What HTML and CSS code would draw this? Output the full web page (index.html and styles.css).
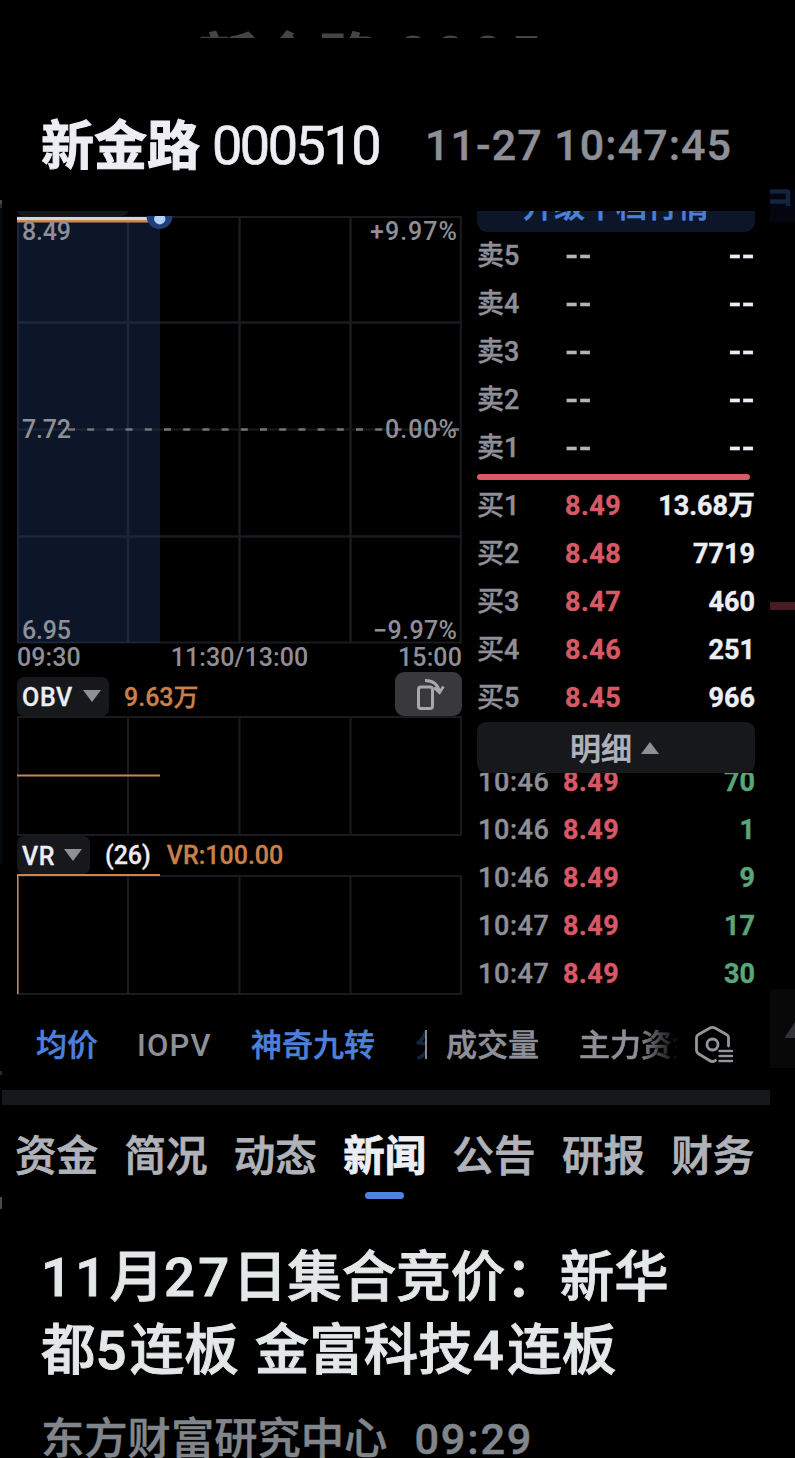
FILE: index.html
```html
<!DOCTYPE html>
<html lang="zh-CN">
<head>
<meta charset="utf-8">
<title>新金路 000510</title>
<link rel="stylesheet" href="styles.css">
</head>
<body>
<div class="page">
  <div class="edge edge-left"><i class="l1"></i><i class="l2"></i><i class="l3"></i><i class="l4"></i><i class="l5"></i></div>
  <div class="edge edge-right">
    <svg width="25" height="1458" viewBox="0 0 25 1458">
      <rect x="0" y="190" width="25" height="32" fill="#03060f"/>
      <path d="M0 191.500H18M18 190V206M0 201.500H18" fill="none" stroke="#14233f" stroke-width="4.500"/>
      <rect x="0" y="602" width="25" height="8" fill="#481a22"/>
      <rect x="0" y="989" width="25" height="79" fill="#080808"/>
      <path d="M15 1037L25 1022V1038H16Z" fill="#323234"/>
    </svg>
  </div>

  <div class="peek"><span class="peek-name">新金路</span><span class="peek-code">0005</span></div>
  <header class="header">
    <h1 class="name">新金路</h1><span class="code">000510</span><time class="time">11-27 10:47:45</time>
  </header>

  <main class="quote">
    <section class="charts">
      <svg class="chart-main" width="445" height="433" viewBox="17 211 445 433">
        <path d="M17 211H129Q127 216 121 216H24Q18 216 17 211Z" fill="#151619"/>
        <g stroke="#1a1b1f" fill="none">
          <path d="M17 217H462M460.750 216V643M18 216V643M17 642.500H462" stroke-width="2"/>
          <path d="M128 217V643M239.500 217V643M350.500 217V643M17 322.500H462M17 536.500H462" stroke-width="2.500"/>
          <path d="M17 429.500H462" stroke-width="2"/>
        </g>
        <rect x="17" y="219" width="143" height="424" fill="#1e3864" fill-opacity=".4"/>
        <path d="M68 429.500H460" stroke="#74747a" stroke-width="2.600" stroke-dasharray="7 12.200"/>
        <path d="M17 221H150" stroke="#c98b55" stroke-width="3"/>
        <path d="M17 218.500H156" stroke="#d5d6da" stroke-width="3"/>
        <path d="M146.500 216H172.500A13 13 0 1 1 146.500 216" fill="#203f76"/>
        <path d="M155 216H164.500A5.500 5.500 0 1 1 155 216" fill="#b1d2fa"/>
        <g class="axis">
          <text x="22" y="240" textLength="49">8.49</text>
          <text x="22" y="438" textLength="49">7.72</text>
          <text x="22" y="639" textLength="49">6.95</text>
          <text x="370" y="240" textLength="87">+9.97%</text>
          <text x="385" y="438" textLength="72">0.00%</text>
          <text x="373" y="639" textLength="84">−9.97%</text>
        </g>
      </svg>
      <div class="hours"><span>09:30</span><span>11:30/13:00</span><span>15:00</span></div>
      <div class="indicator">
        <button class="chip obv">OBV<i class="down"></i></button><span class="value">9.63万</span>
        <button class="rotate" aria-label="横屏">
          <svg width="67" height="44" viewBox="0 0 67 44" fill="none" stroke="#a8a8ac" stroke-width="3">
            <rect x="23.500" y="15" width="14" height="21.500" rx="2.500"/>
            <path d="M30 8.500C38 8.500 43 12 44.500 20M39 15.500L44.500 20.500L48.500 14.500" stroke-width="2.800"/>
          </svg>
        </button>
      </div>
      <svg class="chart-sub" width="445" height="120" viewBox="17 716 445 120">
        <path d="M17 717H461V835H18V717M128 717V835M239.500 717V835M350.500 717V835" fill="none" stroke="#1a1b1f" stroke-width="2"/>
        <path d="M17 775.500H160" stroke="#c98555" stroke-width="2.200"/>
      </svg>
      <div class="indicator vr-row">
        <button class="chip vr">VR<i class="down"></i></button><span class="param">(26)</span><span class="value">VR:100.00</span>
      </div>
      <svg class="chart-sub" width="445" height="121" viewBox="17 874 445 121">
        <path d="M17 876H461V994H18V876M128 876V994M239.500 876V994M350.500 876V994" fill="none" stroke="#1a1b1f" stroke-width="2"/>
        <path d="M17.500 994V875H160" fill="none" stroke="#c98555" stroke-width="2"/>
      </svg>
    </section>

    <section class="book">
      <div class="promo"><span>升级十档行情</span></div>
      <ul class="rows">
        <li><span>卖5</span><b class="none">--</b><strong class="none">--</strong></li>
        <li><span>卖4</span><b class="none">--</b><strong class="none">--</strong></li>
        <li><span>卖3</span><b class="none">--</b><strong class="none">--</strong></li>
        <li><span>卖2</span><b class="none">--</b><strong class="none">--</strong></li>
        <li><span>卖1</span><b class="none">--</b><strong class="none">--</strong></li>
      </ul>
      <div class="split"></div>
      <ul class="rows">
        <li><span>买1</span><b>8.49</b><strong>13.68万</strong></li>
        <li><span>买2</span><b>8.48</b><strong>7719</strong></li>
        <li><span>买3</span><b>8.47</b><strong>460</strong></li>
        <li><span>买4</span><b>8.46</b><strong>251</strong></li>
        <li><span>买5</span><b>8.45</b><strong>966</strong></li>
      </ul>
      <button class="detail"><span>明细</span><i class="up"></i></button>
      <ul class="rows ticks">
        <li><span>10:46</span><b>8.49</b><strong>70</strong></li>
        <li><span>10:46</span><b>8.49</b><strong>1</strong></li>
        <li><span>10:46</span><b>8.49</b><strong>9</strong></li>
        <li><span>10:47</span><b>8.49</b><strong>17</strong></li>
        <li><span>10:47</span><b>8.49</b><strong>30</strong></li>
      </ul>
    </section>
  </main>

  <div class="options">
    <span class="on w1">均价</span><span class="w2">IOPV</span><span class="on w3">神奇九转</span><span class="on cut-left">分</span><i class="bar"></i><span class="w4">成交量</span><span class="cut-right">主力资金</span>
    <svg class="gear" width="40" height="40" viewBox="0 0 40 40" fill="none" stroke="#94949a" stroke-width="2.800" stroke-linecap="round">
      <path d="M34.500 21V12.500Q34.500 10.500 32.500 9.500L20.500 2.800Q18.500 1.800 16.500 2.800L4.500 9.500Q2.500 10.500 2.500 12.500V25.500Q2.500 27.500 4.500 28.700L15.500 35.500Q18.500 37.500 21.500 35.500"/>
      <circle cx="18.500" cy="19.500" r="5.500"/>
      <path d="M25.500 26H38M25.500 31H38M25.500 36H38" stroke-width="2.400"/>
    </svg>
  </div>
  <div class="band"></div>
  <nav class="tabs">
    <a>资金</a><a>简况</a><a>动态</a><a class="active">新闻</a><a>公告</a><a>研报</a><a>财务</a>
  </nav>
  <article class="news">
    <h2><span class="line"><span class="num">11</span>月<span class="num">27</span>日集合竞价：新华</span><span class="line">都<span class="num">5</span>连板 金富科技<span class="num">4</span>连板</span></h2>
    <p><span>东方财富研究中心</span><time>09:29</time></p>
  </article>
</div>
</body>
</html>
```
FILE: styles.css
```css
* { box-sizing: border-box; margin: 0; padding: 0; }
body { background: #000; color: #8e8f97; font-family: Roboto, "Noto Sans CJK SC", sans-serif; }
button { border: 0; font: inherit; color: inherit; }
ul { list-style: none; }
span, b, strong, time, a, h1 { white-space: nowrap; }
.page { position: relative; width: 795px; height: 1458px; overflow: hidden; background: #000; }

.edge { position: absolute; top: 0; height: 1458px; }
.edge-left { left: 0; width: 2px; }
.edge-right { right: 0; width: 25px; }
.edge svg { display: block; }
.edge-left i { position: absolute; left: 0; width: 2px; }
.l1 { top: 200px; height: 4px; background: #44464a; }
.l2 { top: 204px; height: 4px; background: #3a2818; }
.l3 { top: 208px; height: 657px; background: #03080a; }
.l4 { top: 1071px; height: 4px; background: #3a2818; }
.l5 { top: 1197px; height: 12px; background: #4a4a4c; }

.peek { height: 38px; overflow: hidden; display: flex; padding-left: 198px; color: #454547; }
.peek-name { font-size: 59px; line-height: 60px; font-weight: 700; letter-spacing: 1px; padding-top: 32px; -webkit-text-stroke: 1px; }
.peek-code { font-size: 56px; line-height: 60px; font-weight: 500; letter-spacing: 5.500px; padding: 27px 0 0 19px; }

.header { height: 173px; padding: 70px 0 0 41px; display: flex; align-items: flex-start; line-height: 78px; }
.name { font-size: 53px; font-weight: 700; color: #ededf4; width: 171px; -webkit-text-stroke: 1px; }
.code { font-size: 54px; color: #ededf4; letter-spacing: -2.500px; width: 213px; margin-top: -1px; -webkit-text-stroke: .6px; }
.time { font-size: 43px; font-weight: 500; letter-spacing: 1.050px; margin-top: -2px; -webkit-text-stroke: .4px; }

.quote { height: 795px; display: flex; gap: 15px; padding-left: 17px; }
.charts { width: 445px; display: flex; flex-direction: column; }
.charts > svg { display: block; flex: none; }
.axis { font-size: 25px; font-weight: 500; fill: #8e8f97; }
.hours { height: 28px; line-height: 27px; display: flex; justify-content: space-between; font-size: 25px; font-weight: 500; letter-spacing: .1px; }
.indicator { height: 44px; display: flex; align-items: flex-end; font-size: 25px; font-weight: 500; color: #c9804b; }
.chip { height: 39px; background: #17181b; border-radius: 7px; display: flex; align-items: center; justify-content: space-between; color: #ededf4; padding: 2px 8px 0 5px; letter-spacing: .7px; -webkit-text-stroke: .3px; }
.obv { width: 92px; }
.vr { width: 73px; }
.down, .up { border: 9px solid transparent; border-bottom: 0; border-top: 12px solid #8e8f97; margin-top: -3px; }
.up { border-top: 0; border-bottom: 12px solid #8e8f97; }
.value { line-height: 37px; margin-left: 15px; -webkit-text-stroke: .3px; }
.rotate { width: 67px; height: 44px; margin-left: auto; border-radius: 9px; background: #39393d; }
.rotate svg { display: block; }
.vr-row { height: 38px; }
.vr-row .chip { height: 38px; }
.param { color: #ededf4; line-height: 37px; margin-left: 15px; -webkit-text-stroke: .3px; }
.vr-row .value { margin-left: 16px; line-height: 37px; }

.book { width: 278px; }
.promo { height: 21px; border-radius: 0 0 10px 10px; background: #0c1628; overflow: hidden; color: #4a80da; font-size: 31px; font-weight: 500; line-height: 40px; text-align: center; display: flex; justify-content: center; -webkit-text-stroke: .6px; }
.promo span { margin-top: -24px; }
.rows li { height: 48px; display: grid; grid-template-columns: 88px 70px 1fr; align-items: center; line-height: 48px; font-size: 27px; font-weight: 500; -webkit-text-stroke: .4px; }
.rows b { color: #d85865; font-weight: 700; letter-spacing: .5px; }
.rows strong { color: #ededf4; text-align: right; font-weight: 700; }
.rows .none { letter-spacing: 0; transform: scaleX(1.260); transform-origin: left; }
.rows b.none { color: #b4b4ba; }
.rows strong.none { transform-origin: right; }
.split { width: 273px; height: 6px; border-radius: 3px; background: #d85a66; margin: 2px 0 2px; }
.detail { width: 278px; height: 51px; border-radius: 9px; background: #17181b; color: #b0b2ba; font-size: 31px; font-weight: 500; display: flex; justify-content: center; align-items: center; gap: 9px; -webkit-text-stroke: .6px; padding-right: 3px; }
.detail span { margin-top: -3px; }
.detail .up { margin-top: 0; }
.ticks { height: 225px; overflow: hidden; }
.ticks li { grid-template-columns: 86px 72px 1fr; }
.ticks li:first-child { margin-top: -15px; }
.ticks li span { padding-left: 1px; letter-spacing: .6px; }
.ticks strong { color: #5ba57a; }

.options { height: 84px; padding: 15px 0 0 36px; display: flex; font-size: 31px; line-height: 50px; font-weight: 500; -webkit-text-stroke: .5px; }
.options .on { color: #4c80dc; }
.w1 { width: 101px; }
.options .w2 { width: 114px; letter-spacing: 1.200px; -webkit-text-stroke: 0; }
.w3 { width: 164px; }
.cut-left { width: 10px; overflow: hidden; opacity: .28; }
.bar { width: 2px; height: 29px; background: #85868e; margin: 9px 19px 0 0; }
.w4 { width: 133px; }
.cut-right { width: 100px; overflow: hidden; -webkit-mask-image: linear-gradient(90deg, #000 60%, transparent); mask-image: linear-gradient(90deg, #000 60%, transparent); }
.gear { margin: 4px 0 0 15px; flex: none; }
.band { width: 768px; height: 15px; margin-left: 2px; background: #17181b; }
.tabs { height: 125px; padding: 18px 0 0 15px; display: grid; grid-template-columns: repeat(7, 109.400px); font-size: 41.500px; line-height: 68px; font-weight: 500; color: #b0b2ba; -webkit-text-stroke: .8px; }
.active { color: #ededf4; font-weight: 700; }
.active::after { content: ""; display: block; width: 39px; height: 7px; border-radius: 4px; margin: 1px 0 0 22px; background: #4d84e3; }
.news { padding: 11px 0 0 41px; color: #e3e7e8; }
.news h2 { font-size: 54.500px; line-height: 73px; font-weight: 500; -webkit-text-stroke: .9px; }
.line { display: block; word-spacing: 2.500px; }
.num { letter-spacing: 3.300px; }
.news p { display: flex; gap: 27px; font-size: 43.300px; line-height: 60px; font-weight: 500; color: #80868b; margin-top: 23px; -webkit-text-stroke: .5px; }
.news time { letter-spacing: 1.800px; }
```
